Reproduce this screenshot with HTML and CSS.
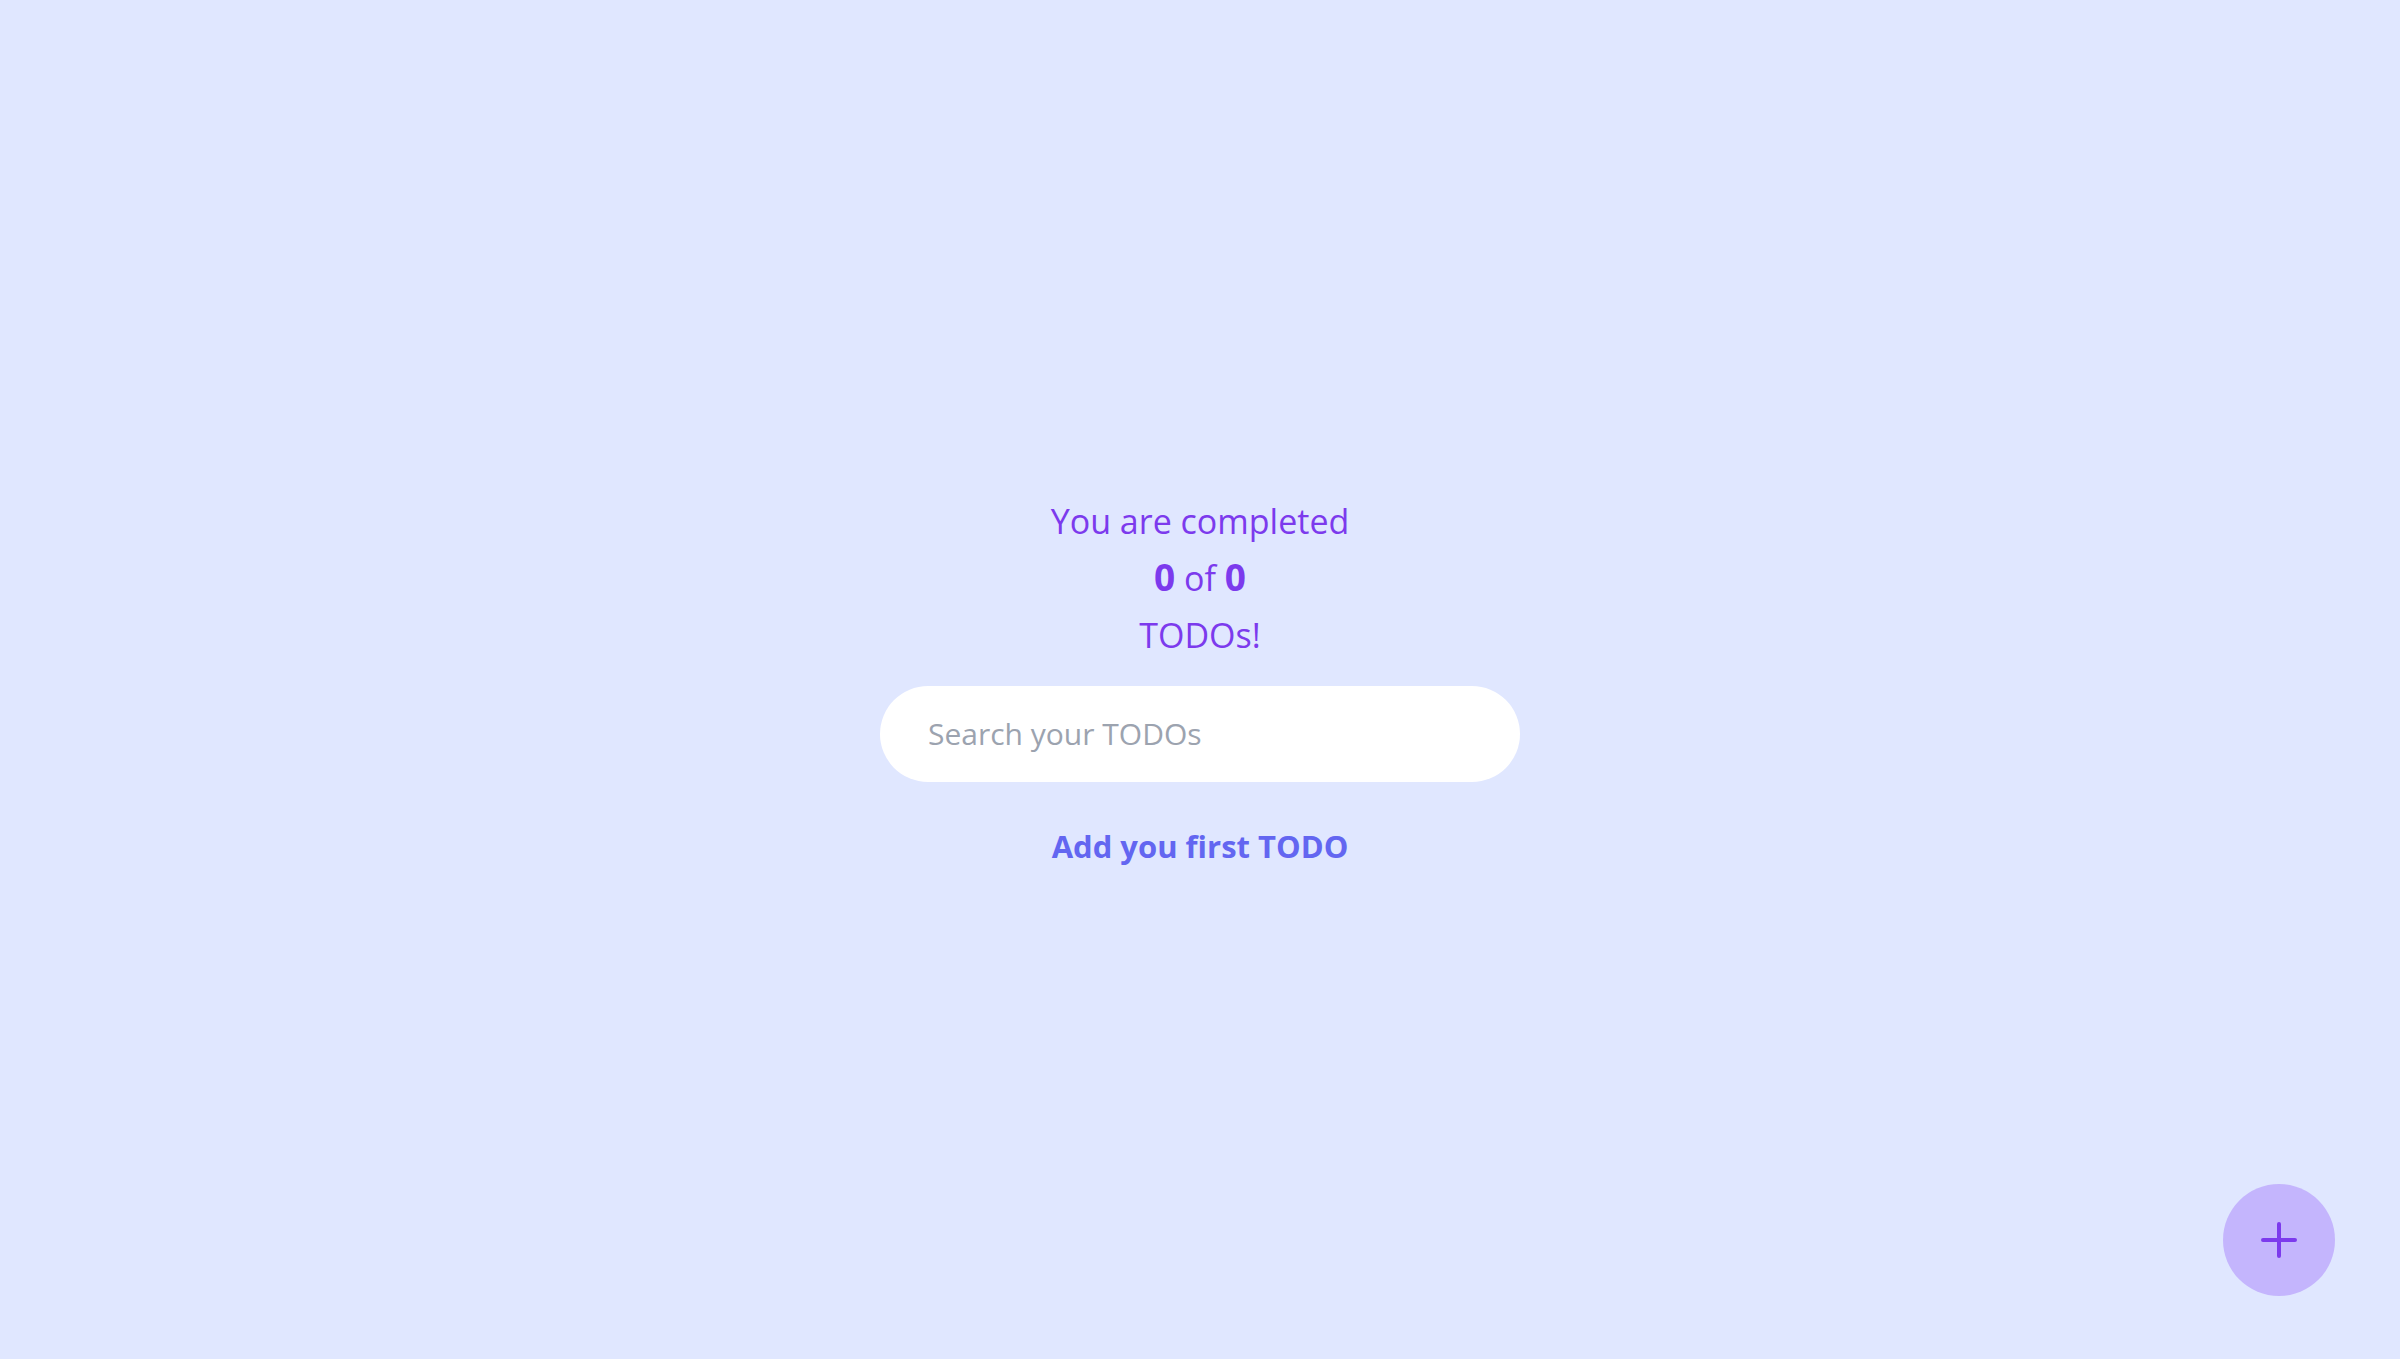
FILE: index.html
```html
<!DOCTYPE html>
<html lang="en">
<head>
<meta charset="utf-8">
<title>TODO</title>
<link rel="stylesheet" href="styles.css">
</head>
<body>
<main class="app">
  <h1 class="counter">
    <span class="counter-line">You are completed</span>
    <span class="counter-line"><strong>0</strong> of <strong>0</strong></span>
    <span class="counter-line">TODOs!</span>
  </h1>
  <input class="search" type="text" placeholder="Search your TODOs">
  <p class="empty">Add you first TODO</p>
</main>
<button class="fab" type="button" aria-label="Add TODO">
  <svg width="36" height="36" viewBox="0 0 36 36" fill="none" stroke="#7c3aed" stroke-width="4" stroke-linecap="round">
    <path d="M18 2v32M2 18h32"/>
  </svg>
</button>
</body>
</html>
```

FILE: styles.css
```css
* { box-sizing: border-box; }
html, body { margin: 0; padding: 0; }
body {
  background: #e0e7ff;
  font-family: "Open Sans", "Noto Sans", sans-serif;
  min-height: 100vh;
}
.app {
  min-height: 100vh;
  display: flex;
  flex-direction: column;
  align-items: center;
  justify-content: center;
}
.counter {
  margin: 0;
  color: #7c3aed;
  font-weight: 400;
  font-size: 34px;
  line-height: 57px;
  text-align: center;
}
.counter-line { display: block; }
.counter strong { font-weight: 700; font-size: 37px; line-height: 1; }
.search {
  margin-top: 22px;
  width: 640px;
  height: 96px;
  border: none;
  outline: none;
  border-radius: 48px;
  background: #fff;
  padding: 0 48px;
  font-family: inherit;
  font-size: 30px;
  color: #374151;
}
.search::placeholder { color: #9ca3af; }
.empty {
  margin: 43px 0 0;
  color: #6366f1;
  font-size: 31px;
  font-weight: 700;
}
.fab {
  position: fixed;
  right: 65px;
  bottom: 63px;
  width: 112px;
  height: 112px;
  border-radius: 50%;
  border: none;
  background: #c4b5fd;
  display: flex;
  align-items: center;
  justify-content: center;
  padding: 0;
  cursor: pointer;
}
```
